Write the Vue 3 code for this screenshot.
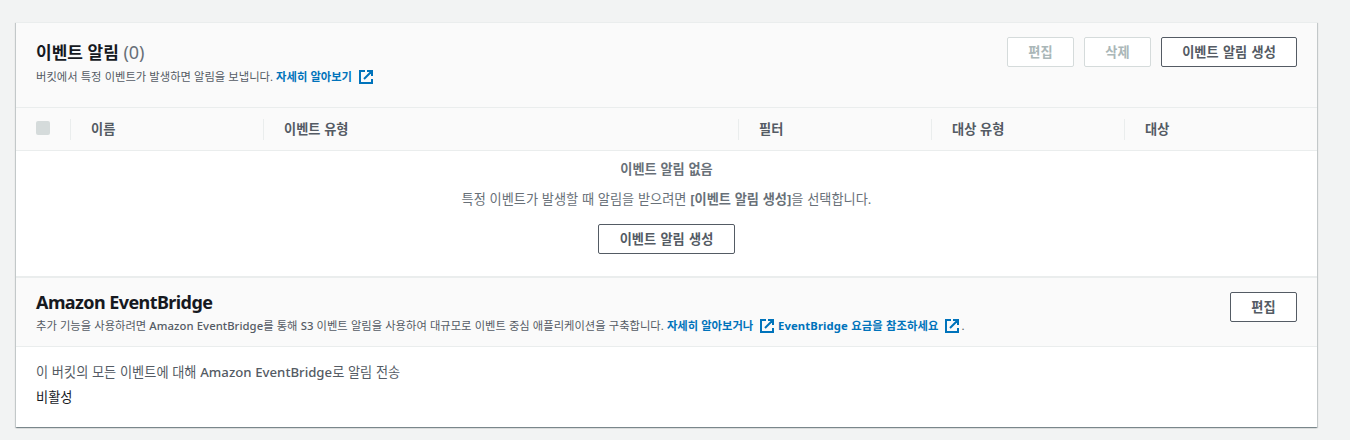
<script setup>
import { h } from 'vue'

const ExternalIcon = () =>
  h('svg', { class: 'ext', viewBox: '0 0 16 16', width: 16, height: 16, fill: 'none', stroke: 'currentColor', 'stroke-width': 2 }, [
    h('path', { d: 'M7 2H2v12h12V10M9 2h5v5M6 10l8-8' })
  ])

const columns = [
  { label: '이름', cls: 'c-name' },
  { label: '이벤트 유형', cls: 'c-type' },
  { label: '필터', cls: 'c-filter' },
  { label: '대상 유형', cls: 'c-dtype' },
  { label: '대상', cls: 'c-dest' }
]
</script>

<template>
  <main class="page">
    <section class="panel">
      <header class="head first">
        <div>
          <h2 class="title">이벤트 알림 <span class="count">(0)</span></h2>
          <p class="desc">버킷에서 특정 이벤트가 발생하면 알림을 보냅니다. <a class="link">자세히 알아보기 <ExternalIcon /></a></p>
        </div>
        <div class="actions">
          <button class="btn small off" disabled>편집</button>
          <button class="btn small off" disabled>삭제</button>
          <button class="btn wide">이벤트 알림 생성</button>
        </div>
      </header>
      <div class="thead">
        <div class="check"><span class="box"></span></div>
        <div v-for="c in columns" :key="c.cls" class="col" :class="c.cls">{{ c.label }}</div>
      </div>
      <div class="empty">
        <strong class="empty-title">이벤트 알림 없음</strong>
        <p class="empty-text">특정 이벤트가 발생할 때 알림을 받으려면 <b>[이벤트 알림 생성]</b>을 선택합니다.</p>
        <button class="btn wide">이벤트 알림 생성</button>
      </div>
      <header class="head second">
        <div>
          <h2 class="title latin">Amazon EventBridge</h2>
          <p class="desc">추가 기능을 사용하려면 <span class="en">Amazon EventBridge</span>를 통해 <span class="en">S3</span> 이벤트 알림을 사용하여 대규모로 이벤트 중심 애플리케이션을 구축합니다. <a class="link">자세히 알아보거나 <ExternalIcon /></a> <a class="link pricing"><span class="en">EventBridge</span> 요금을 참조하세요 <ExternalIcon /></a>.</p>
        </div>
        <div class="actions"><button class="btn small">편집</button></div>
      </header>
      <div class="body">
        <div class="label">이 버킷의 모든 이벤트에 대해 <span class="en">Amazon EventBridge</span>로 알림 전송</div>
        <div class="value">비활성</div>
      </div>
    </section>
  </main>
</template>

<style>
body { background: #f2f3f3; }
</style>

<style scoped>
.page {
  box-sizing: border-box;
  height: 440px;
  padding: 22px 33px 13px 16px;
  background: #f2f3f3;
  font-family: "Noto Sans", "Noto Sans CJK KR", sans-serif;
  font-size: 13.2px;
  color: #545b64;
  word-spacing: .3px;
  white-space: nowrap;
  overflow: hidden;
}
h2, p { margin: 0; }
.panel {
  height: 405px;
  box-sizing: border-box;
  background: #fff;
  border-top: 1px solid #eaeded;
  box-shadow: 0 1px 1px 0 rgba(0, 28, 36, .3), 1px 1px 1px 0 rgba(0, 28, 36, .15), -1px 1px 1px 0 rgba(0, 28, 36, .15);
}
.head {
  display: flex;
  justify-content: space-between;
  box-sizing: border-box;
  padding: 14px 20px 0;
  background: #fafafa;
  border-bottom: 1px solid #eaeded;
}
.first { height: 85px; }
.second { height: 71px; border-top: 2px solid #eaeded; }
.title {
  font-size: 17px;
  line-height: 30px;
  height: 30px;
  font-weight: 700;
  color: #16191f;
  word-spacing: .2px;
}
.title.latin {
  height: 22px;
  line-height: 20px;
  font-size: 18px;
  letter-spacing: -.58px;
  word-spacing: 0;
}
.second .desc { line-height: 24px; }
.count { font-size: 18px; font-weight: 400; color: #687078; letter-spacing: -.1px; }
.desc { font-size: 11.3px; line-height: 20px; word-spacing: .2px; }
.desc .en { font-weight: 500; letter-spacing: .05px; }
.label .en { font-weight: 500; }
.link { color: #0073bb; font-weight: 700; }
.link .en { font-weight: 700; letter-spacing: .1px; }
.pricing { letter-spacing: .12px; }
:deep(.ext), .ext { vertical-align: -4px; margin-left: 2.6px; }
.pricing :deep(.ext), .pricing .ext { margin-right: 1px; }
.actions { display: flex; gap: 10px; }
.btn {
  box-sizing: border-box;
  height: 30px;
  padding: 0;
  border: 1px solid #545b64;
  border-radius: 2px;
  background: #fff;
  color: #545b64;
  font: 700 13.2px/28px "Noto Sans", "Noto Sans CJK KR", sans-serif;
  word-spacing: .9px;
}
.small { width: 67px; }
.wide { width: 136px; }
.off { border-color: #d5dbdb; color: #aab7b8; }
.thead {
  display: flex;
  align-items: center;
  box-sizing: border-box;
  height: 43px;
  background: #fafafa;
  border-bottom: 1px solid #eaeded;
  font-weight: 700;
}
.check { width: 54px; height: 16px; padding-left: 20px; box-sizing: border-box; }
.box { display: block; width: 14px; height: 14px; border-radius: 2px; background: #d5dbdb; }
.col {
  box-sizing: border-box;
  height: 21px;
  line-height: 20px;
  padding-left: 20px;
  border-left: 1px solid #eaeded;
}
.c-name { width: 193px; }
.c-type { width: 475px; }
.c-filter { width: 193px; }
.c-dtype { width: 193px; }
.c-dest { flex: 1; }
.empty {
  display: flex;
  flex-direction: column;
  align-items: center;
  box-sizing: border-box;
  height: 125px;
  padding-top: 7px;
  color: #687078;
}
.empty-title { line-height: 22px; }
.empty-text { margin: 8px 0 14px; line-height: 22px; }
.empty .wide { width: 137px; }
.body { padding: 14px 20px 0; }
.label { line-height: 22px; }
.value { margin-top: 3px; line-height: 22px; color: #16191f; }
</style>
